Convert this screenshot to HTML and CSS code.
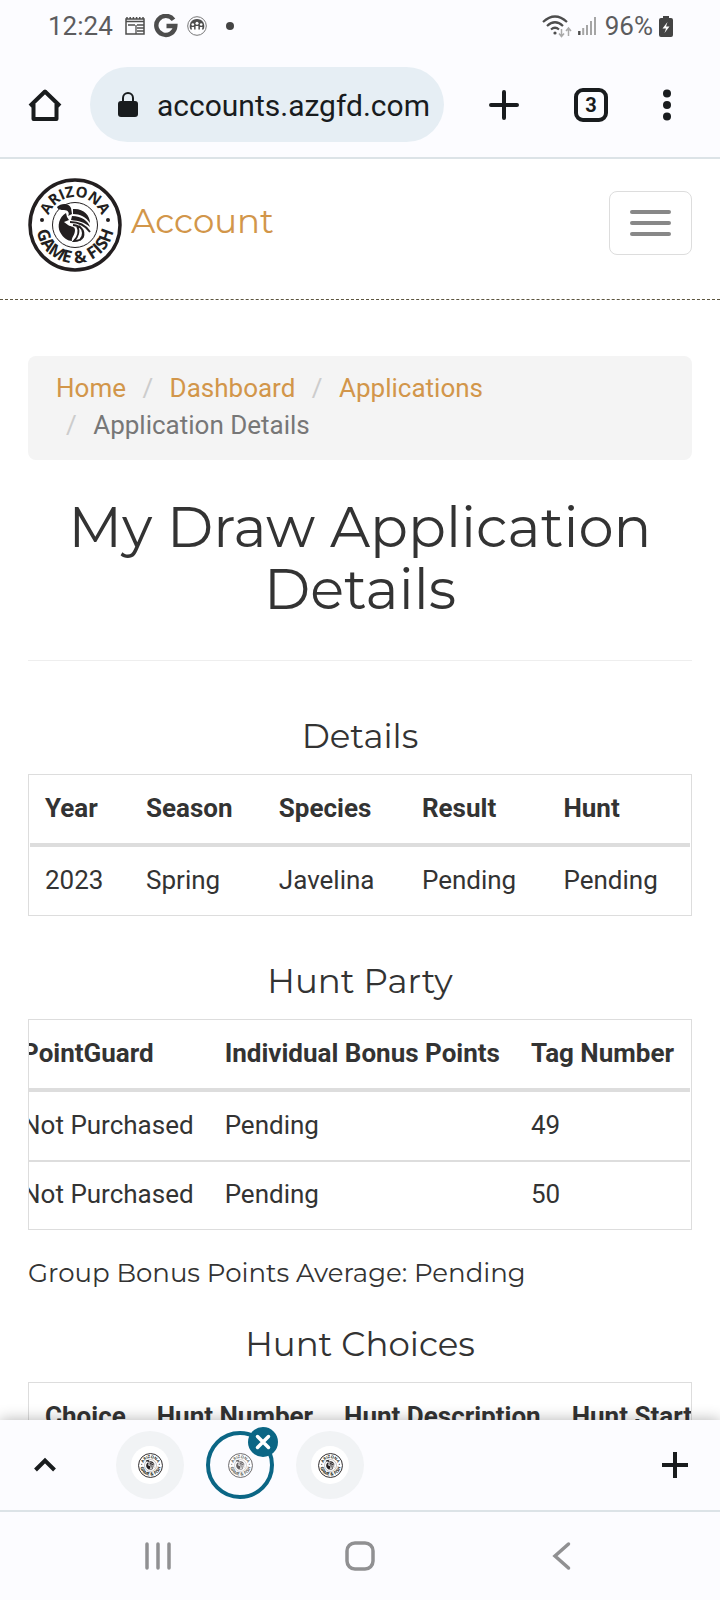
FILE: index.html
```html
<!DOCTYPE html>
<html lang="en">
<head>
<meta charset="utf-8">
<meta name="viewport" content="width=device-width, initial-scale=1">
<title>My Draw Application Details</title>
<link rel="stylesheet" href="styles.css">
</head>
<body>
<svg class="defs" aria-hidden="true">
  <defs>
    <path id="arc-top" d="M19 47A28 28 0 0 1 75 47"/>
    <path id="arc-bottom" d="M10 34A39 39 0 1 0 84 34"/>
    <symbol id="seal" viewBox="0 0 94 94">
      <circle cx="47" cy="47" r="45" fill="#fff" stroke="#231f20" stroke-width="3.5"/>
      <circle cx="47" cy="47" r="22.500" fill="none" stroke="#231f20" stroke-width="1"/>
      <circle cx="14" cy="42" r="2" fill="#231f20"/>
      <circle cx="80" cy="42" r="2" fill="#231f20"/>
      <text class="seal-text"><textPath href="#arc-top" startOffset="50%">ARIZONA</textPath></text>
      <text class="seal-text seal-text-lower"><textPath href="#arc-bottom" startOffset="50%">GAME &amp; FISH</textPath></text>
      <path d="M29 29C33 25 41 25 43 30L44 36L40 38C42 35 40 32 36 32C33 32 30 32 29 29Z" fill="#231f20"/>
      <path d="M38 35C31 39 29 48 32 54C35 60 40 63 44 63C43 60 47 57 47 52C47 48 43 49 40 47L36 44L41 42L39 39Z" fill="#231f20"/>
      <path d="M45 31C55 30 62 37 62 45C58 39 52 36 45 36ZM44 38C54 38 60 43 62 49C56 44 51 43 43 42Z" fill="#231f20"/>
      <path d="M42 44C51 44 58 48 62 54M45 47C53 48 57 52 55 59C53 62 49 63 46 63C50 59 52 53 49 48M51 48C56 52 56 58 52 62" fill="none" stroke="#231f20" stroke-width="1.800"/>
    </symbol>
  </defs>
</svg>

<div class="status">
  <div class="status-left">
    <span class="status-time">12:24</span>
    <svg width="20" height="20" viewBox="0 0 20 20"><path d="M1 5.500V18h18V3H1v2.500h18M2 3V1m3.200 2V1m3.200 2V1m3.200 2V1m3.200 2V1M18 3V1" fill="none" stroke="#4d4d4d" stroke-width="1.500"/><path d="M3 9h7M11 9v9M12 9h7m-7 3h7m-7 3h7" stroke="#4d4d4d" stroke-width="1.300"/></svg>
    <svg width="24" height="24" viewBox="0 0 24 24"><path d="M19.500 5.800A9.500 9.500 0 1 0 21.300 12H12.500" fill="none" stroke="#4d4d4d" stroke-width="4.400"/></svg>
    <svg width="20" height="20" viewBox="0 0 20 20"><circle cx="10" cy="10" r="9.300" fill="none" stroke="#777" stroke-width="1"/><path d="M3.500 13.500A7.300 7.300 0 1 1 16.500 13.500Z" fill="#4d4d4d"/><g fill="#fff"><circle cx="5.800" cy="8.500" r="1.300"/><circle cx="10" cy="7.200" r="1.500"/><circle cx="14.200" cy="8.500" r="1.300"/><path d="M4.500 11h2.600v5H5.500zM8.600 10h2.800v7.500H8.600zM12.900 11h2.600l-1 5h-1.600z"/></g></svg>
    <span class="status-dot"></span>
  </div>
  <div class="status-right">
    <svg width="30" height="24" viewBox="0 0 30 24"><g fill="none" stroke="#4d4d4d" stroke-width="2.200"><path d="M1 8Q13 -3 25 8M5 12Q13 4.500 21 12M9 15.500Q13 12 17 15.500"/></g><circle cx="13" cy="19" r="1.600" fill="#4d4d4d"/><path d="M19.500 15v7M17 19.500l2.500 3 2.500-3M26.500 22v-8M24 17l2.500-3L29 17" fill="none" stroke="#aaa" stroke-width="1.500"/></svg>
    <svg width="18" height="20" viewBox="0 0 18 20"><path d="M1.300 15v4" stroke="#4d4d4d" stroke-width="2.400"/><path d="M5.200 12v7M9 9v10M13 5v14M17 1v18" stroke="#a5a5a5" stroke-width="2"/></svg>
    <span class="status-pct">96%</span>
    <svg width="14" height="21" viewBox="0 0 14 21"><path d="M4 0h6v2h2a2 2 0 0 1 2 2v15a2 2 0 0 1-2 2H2a2 2 0 0 1-2-2V4a2 2 0 0 1 2-2h2Z" fill="#444"/><path d="M8.500 6 3.500 12.500H7L5.500 17l5-6.500H7Z" fill="#fff"/></svg>
  </div>
</div>

<div class="toolbar">
  <button class="icon-btn" aria-label="Home"><svg width="34" height="34" viewBox="0 0 34 34"><path d="M2 18 17 3.500 32 18M5.500 16V31H28.500V16" fill="none" stroke="#191c1e" stroke-width="4" stroke-linejoin="round"/></svg></button>
  <div class="address">
    <svg width="20" height="26" viewBox="0 0 20 26"><rect y="9" width="20" height="16" rx="3" fill="#191c1e"/><path d="M5 10V6a5 5 0 0 1 10 0v4" fill="none" stroke="#191c1e" stroke-width="2"/></svg>
    <input class="address-input" type="text" value="accounts.azgfd.com" aria-label="Address">
  </div>
  <div class="toolbar-actions">
    <button class="icon-btn" aria-label="New tab"><svg width="30" height="30" viewBox="0 0 30 30"><path d="M15 2v26M2 15h26" stroke="#191c1e" stroke-width="4" stroke-linecap="round"/></svg></button>
    <button class="icon-btn tab-count" aria-label="3 open tabs">3</button>
    <button class="icon-btn" aria-label="Menu"><svg width="8" height="32" viewBox="0 0 8 32"><g fill="#191c1e"><circle cx="4" cy="4.500" r="4"/><circle cx="4" cy="16" r="4"/><circle cx="4" cy="27.500" r="4"/></g></svg></button>
  </div>
</div>

<div class="page">
  <header class="site-header">
    <a class="brand" href="#"><svg class="brand-logo" role="img" aria-label="Arizona Game and Fish"><use href="#seal"/></svg><span class="brand-name">Account</span></a>
    <button class="menu-btn" aria-label="Toggle navigation"><span class="bar"></span><span class="bar"></span><span class="bar"></span></button>
  </header>
  <main class="content">
    <nav aria-label="Breadcrumb">
      <ol class="crumbs">
        <li><a href="#">Home</a></li>
        <li><a href="#">Dashboard</a></li>
        <li><a href="#">Applications</a></li>
        <li>Application Details</li>
      </ol>
    </nav>
    <h1 class="title">My Draw Application Details</h1>
    <h2 class="section-title">Details</h2>
    <div class="table-box">
      <table class="table table-full">
        <thead><tr><th>Year</th><th>Season</th><th>Species</th><th>Result</th><th>Hunt</th></tr></thead>
        <tbody><tr><td>2023</td><td>Spring</td><td>Javelina</td><td>Pending</td><td>Pending</td></tr></tbody>
      </table>
    </div>
    <h2 class="section-title">Hunt Party</h2>
    <div class="table-box scrolled-end">
      <table class="table">
        <thead><tr><th>PointGuard</th><th>Individual Bonus Points</th><th>Tag Number</th></tr></thead>
        <tbody>
          <tr><td>Not Purchased</td><td>Pending</td><td>49</td></tr>
          <tr><td>Not Purchased</td><td>Pending</td><td>50</td></tr>
        </tbody>
      </table>
    </div>
    <p class="average">Group Bonus Points Average: Pending</p>
    <h2 class="section-title">Hunt Choices</h2>
    <div class="table-box">
      <table class="table">
        <thead><tr><th>Choice</th><th>Hunt Number</th><th>Hunt Description</th><th>Hunt Start</th></tr></thead>
      </table>
    </div>
  </main>
</div>

<div class="tab-strip">
  <button class="icon-btn" aria-label="Show tabs"><svg width="34" height="24" viewBox="0 0 34 24"><path d="M7.500 17 17 7.500 26.500 17" fill="none" stroke="#191c1e" stroke-width="4"/></svg></button>
  <div class="tabs">
    <button class="tab" aria-label="Tab 1"><span class="tab-face"><svg class="tab-logo"><use href="#seal"/></svg></span></button>
    <button class="tab tab-active" aria-label="Close tab 2"><svg class="tab-logo"><use href="#seal"/></svg><span class="close"><svg width="30" height="30" viewBox="0 0 30 30"><path d="M9.500 9.500l11 11M20.500 9.500l-11 11" stroke="#fff" stroke-width="3.500" stroke-linecap="round"/></svg></span></button>
    <button class="tab" aria-label="Tab 3"><span class="tab-face"><svg class="tab-logo"><use href="#seal"/></svg></span></button>
  </div>
  <button class="icon-btn" aria-label="Add tab"><svg width="34" height="34" viewBox="0 0 34 34"><path d="M17 4v26M4 17h26" stroke="#191c1e" stroke-width="4"/></svg></button>
</div>

<div class="system-nav">
  <button class="icon-btn" aria-label="Recent apps"><svg width="30" height="30" viewBox="0 0 30 30"><path d="M4 3v24M15 3v24M26 3v24" stroke="#909092" stroke-width="3.500" stroke-linecap="round"/></svg></button>
  <button class="icon-btn" aria-label="Home screen"><svg width="30" height="30" viewBox="0 0 30 30"><rect x="2" y="2" width="26" height="26" rx="8" fill="none" stroke="#909092" stroke-width="3.500"/></svg></button>
  <button class="icon-btn" aria-label="Back"><svg width="30" height="30" viewBox="0 0 30 30"><path d="M21.500 3 8 15l13.500 12" fill="none" stroke="#909092" stroke-width="3.500" stroke-linecap="round"/></svg></button>
</div>
</body>
</html>
```
FILE: styles.css
```css
* { box-sizing: border-box; }

body {
  margin: 0;
  height: 100vh;
  display: flex;
  flex-direction: column;
  overflow: hidden;
  background: #fff;
  color: #333;
  font-family: Roboto, "Liberation Sans", sans-serif;
  font-size: 26px;
}

svg { display: block; flex: none; }
a { color: #d2964a; text-decoration: none; }

.defs { position: absolute; width: 0; height: 0; }

.seal-text {
  font-family: "Open Sans", "Liberation Sans", sans-serif;
  font-size: 15px;
  font-weight: 700;
  text-anchor: middle;
  fill: #231f20;
}

.seal-text-lower { font-size: 17px; }

.icon-btn {
  display: flex;
  align-items: center;
  justify-content: center;
  padding: 0;
  border: 0;
  background: none;
  font-family: inherit;
}

/* Status bar */
.status {
  flex: none;
  display: flex;
  justify-content: space-between;
  align-items: center;
  height: 52px;
  padding: 0 47px 0 48px;
  background: #fcfcff;
  color: #5c5c5e;
}

.status-left { display: flex; align-items: center; gap: 9px; }
.status-time { padding-right: 3px; }
.status-dot { width: 8px; height: 8px; margin-left: 10px; border-radius: 50%; background: #444; }
.status-right { display: flex; align-items: center; gap: 6px; }
.status-pct { padding-left: 3px; }

/* Browser toolbar */
.toolbar {
  flex: none;
  display: flex;
  align-items: center;
  gap: 28px;
  height: 107px;
  padding: 0 49px 0 28px;
  border-bottom: 2px solid #dce3e7;
  background: #fcfcff;
}

.address {
  flex: 1;
  min-width: 0;
  display: flex;
  align-items: center;
  gap: 19px;
  height: 75px;
  padding: 0 12px 0 28px;
  border-radius: 38px;
  background: #e6eef4;
}

.address-input {
  flex: 1;
  min-width: 0;
  padding: 2px 0 0;
  border: 0;
  background: none;
  color: #191c1e;
  font-family: inherit;
  font-size: 30px;
}

.toolbar-actions { display: flex; align-items: center; gap: 55px; padding-left: 17px; }

.tab-count {
  width: 34px;
  height: 34px;
  border: 4px solid #191c1e;
  border-radius: 9px;
  color: #191c1e;
  font-size: 20px;
  font-weight: 700;
}

/* Web page */
.page { flex: 1; min-height: 0; overflow: hidden; }

.site-header {
  display: flex;
  justify-content: space-between;
  align-items: flex-start;
  padding: 19px 28px 27px;
  border-bottom: 1px dashed #5c553f;
}

.brand {
  display: flex;
  align-items: center;
  gap: 9px;
  font-family: Montserrat, Inter, sans-serif;
  font-size: 34px;
}

.brand-name { padding-bottom: 8px; }
.brand-logo { width: 94px; height: 94px; }

.menu-btn {
  display: flex;
  flex-direction: column;
  align-items: center;
  justify-content: center;
  gap: 7px;
  width: 83px;
  height: 64px;
  margin-top: 13px;
  padding: 0;
  border: 1px solid #ddd;
  border-radius: 8px;
  background: #fff;
}

.bar { width: 41px; height: 4px; border-radius: 2px; background: #888; }

.content { padding: 56px 28px 0; }

.crumbs {
  display: flex;
  flex-wrap: wrap;
  margin: 0;
  padding: 14px 28px 16px;
  border-radius: 8px;
  background: #f4f4f4;
  color: #777;
  line-height: 37px;
  list-style: none;
}

.crumbs li + li::before { content: "/\00a0"; padding: 0 10px; color: #ccc; }
.crumbs li:not(:nth-last-child(-n+2))::after { content: "\00a0"; }

.title {
  margin: 0 0 56px;
  padding: 36px 0 40px;
  border-bottom: 1px solid #eee;
  font-family: Montserrat, Inter, sans-serif;
  font-size: 56px;
  font-weight: 400;
  line-height: 62px;
  text-align: center;
}

.section-title {
  margin: 0 0 19px;
  font-family: Montserrat, Inter, sans-serif;
  font-size: 34px;
  font-weight: 400;
  line-height: 38px;
  text-align: center;
}

.table-box + .section-title { margin-top: 46px; }

.table-box {
  display: flex;
  padding: 0 1px;
  border: 1px solid #ddd;
  overflow: hidden;
}

.scrolled-end { justify-content: flex-end; }

.table {
  flex: none;
  border-collapse: separate;
  border-spacing: 0;
  line-height: 37px;
  text-align: left;
  white-space: nowrap;
}

.table-full { width: 100%; }
.table th, .table td { padding: 15px 16px 16px 15px; }
.table th { border-bottom: 4px solid #ddd; }
.table tr + tr td { padding-top: 14px; border-top: 2px solid #ddd; }

.average {
  margin: 25px 0 34px;
  font-family: Montserrat, Inter, sans-serif;
  font-size: 26px;
  line-height: 36px;
}

/* Tab strip */
.tab-strip {
  position: relative;
  flex: none;
  display: flex;
  align-items: center;
  height: 92px;
  padding: 0 28px;
  border-bottom: 2px solid #dce3e7;
  background: #fcfcff;
  box-shadow: 0 0 14px rgba(0, 0, 0, 0.3);
}

.tabs { flex: 1; display: flex; gap: 22px; padding-left: 54px; }

.tab {
  position: relative;
  display: flex;
  align-items: center;
  justify-content: center;
  width: 68px;
  height: 68px;
  padding: 0;
  border: 0;
  border-radius: 50%;
  background: #f1f3f5;
}

.tab-active { border: 4px solid #0b6685; background: #fcfcff; }
.tab-active .tab-logo { opacity: 0.7; }

.tab-face {
  display: flex;
  align-items: center;
  justify-content: center;
  width: 38px;
  height: 38px;
  border-radius: 50%;
  background: #fff;
}

.tab-logo { width: 25px; height: 25px; }

.close {
  position: absolute;
  top: -8px;
  right: -8px;
  width: 30px;
  height: 30px;
  border-radius: 50%;
  background: #0b6685;
}

/* System navigation */
.system-nav {
  position: relative;
  flex: none;
  display: flex;
  justify-content: space-around;
  align-items: center;
  height: 88px;
  padding: 0 57px;
  background: #fcfcff;
}
```
